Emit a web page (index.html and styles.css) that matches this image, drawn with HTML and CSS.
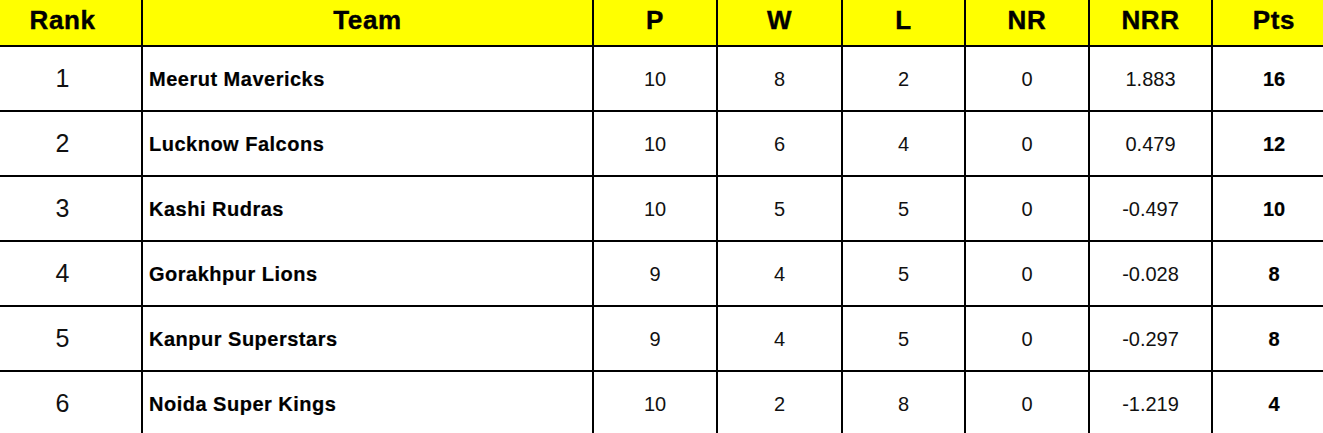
FILE: index.html
```html
<!DOCTYPE html>
<html>
<head>
<meta charset="utf-8">
<link rel="stylesheet" href="styles.css">
</head>
<body>
<div class="table">
  <div class="cell head">Rank</div>
  <div class="cell head">Team</div>
  <div class="cell head">P</div>
  <div class="cell head">W</div>
  <div class="cell head">L</div>
  <div class="cell head">NR</div>
  <div class="cell head">NRR</div>
  <div class="cell head">Pts</div>

  <div class="cell rank">1</div>
  <div class="cell team">Meerut Mavericks</div>
  <div class="cell">10</div>
  <div class="cell">8</div>
  <div class="cell">2</div>
  <div class="cell">0</div>
  <div class="cell">1.883</div>
  <div class="cell pts">16</div>

  <div class="cell rank">2</div>
  <div class="cell team">Lucknow Falcons</div>
  <div class="cell">10</div>
  <div class="cell">6</div>
  <div class="cell">4</div>
  <div class="cell">0</div>
  <div class="cell">0.479</div>
  <div class="cell pts">12</div>

  <div class="cell rank">3</div>
  <div class="cell team">Kashi Rudras</div>
  <div class="cell">10</div>
  <div class="cell">5</div>
  <div class="cell">5</div>
  <div class="cell">0</div>
  <div class="cell">-0.497</div>
  <div class="cell pts">10</div>

  <div class="cell rank">4</div>
  <div class="cell team">Gorakhpur Lions</div>
  <div class="cell">9</div>
  <div class="cell">4</div>
  <div class="cell">5</div>
  <div class="cell">0</div>
  <div class="cell">-0.028</div>
  <div class="cell pts">8</div>

  <div class="cell rank">5</div>
  <div class="cell team">Kanpur Superstars</div>
  <div class="cell">9</div>
  <div class="cell">4</div>
  <div class="cell">5</div>
  <div class="cell">0</div>
  <div class="cell">-0.297</div>
  <div class="cell pts">8</div>

  <div class="cell rank">6</div>
  <div class="cell team">Noida Super Kings</div>
  <div class="cell">10</div>
  <div class="cell">2</div>
  <div class="cell">8</div>
  <div class="cell">0</div>
  <div class="cell">-1.219</div>
  <div class="cell pts">4</div>
</div>
</body>
</html>
```

FILE: styles.css
```css
html, body {
  margin: 0;
  padding: 0;
  background: #ffffff;
  overflow: hidden;
}

.table {
  display: grid;
  grid-template-columns: 157px 449px 122px 123px 121px 122px 121px 122px;
  grid-template-rows: 45px repeat(6, 63px);
  gap: 2px;
  background: #000000;
  margin-left: -16px;
  width: max-content;
  font-family: "Liberation Sans", Arial, sans-serif;
  color: #111111;
}

.cell {
  background: #ffffff;
  display: flex;
  align-items: center;
  justify-content: center;
  font-size: 20px;
  padding-top: 2px;
}

.head {
  background: #ffff00;
  font-weight: bold;
  font-size: 26px;
  letter-spacing: 0.6px;
  -webkit-text-stroke: 0.4px #000000;
  color: #000000;
  padding-top: 0;
  padding-bottom: 5px;
}

.rank {
  font-size: 25px;
  padding-top: 0;
}

.team {
  justify-content: flex-start;
  padding-left: 6px;
  font-weight: bold;
  letter-spacing: 0.5px;
  -webkit-text-stroke: 0.2px #000000;
  color: #000000;
}

.pts {
  font-weight: bold;
  -webkit-text-stroke: 0.2px #000000;
  color: #000000;
}
```
